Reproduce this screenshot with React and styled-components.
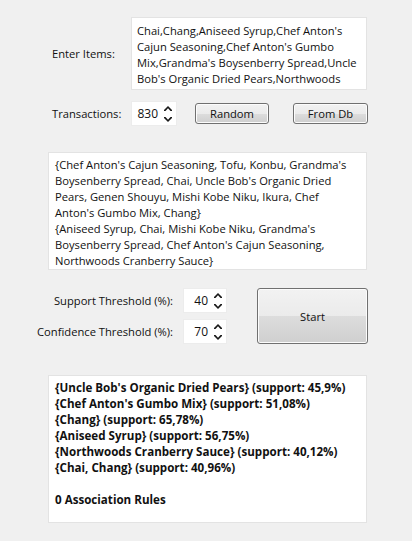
import styled, { createGlobalStyle } from 'styled-components';

const GlobalStyle = createGlobalStyle`
  html, body {
    margin: 0;
    padding: 0;
    background: #f0f0f0;
  }
  body {
    font-family: 'Open Sans', 'Noto Sans', sans-serif;
    font-size: 11.2px;
    color: #111;
  }
`;

const itemLines = [
  "Chai,Chang,Aniseed Syrup,Chef Anton's",
  "Cajun Seasoning,Chef Anton's Gumbo",
  "Mix,Grandma's Boysenberry Spread,Uncle",
  "Bob's Organic Dried Pears,Northwoods",
];

const transactionLines = [
  "{Chef Anton's Cajun Seasoning, Tofu, Konbu, Grandma's",
  "Boysenberry Spread, Chai, Uncle Bob's Organic Dried",
  "Pears, Genen Shouyu, Mishi Kobe Niku, Ikura, Chef",
  "Anton's Gumbo Mix, Chang}",
  "{Aniseed Syrup, Chai, Mishi Kobe Niku, Grandma's",
  "Boysenberry Spread, Chef Anton's Cajun Seasoning,",
  "Northwoods Cranberry Sauce}",
];

const resultLines = [
  "{Uncle Bob's Organic Dried Pears} (support: 45,9%)",
  "{Chef Anton's Gumbo Mix} (support: 51,08%)",
  "{Chang} (support: 65,78%)",
  "{Aniseed Syrup} (support: 56,75%)",
  "{Northwoods Cranberry Sauce} (support: 40,12%)",
  "{Chai, Chang} (support: 40,96%)",
  "",
  "0 Association Rules",
];

function Spinner({ value, width }) {
  return (
    <SpinBox $width={width}>
      <SpinValue>{value}</SpinValue>
      <Arrows>
        <svg width="8" height="5" viewBox="0 0 8 5">
          <path d="M0 4 L4 0 L8 4 L8 5 L6.5 5 L4 2.3 L1.5 5 L0 5 Z" fill="#1a1a1a" />
        </svg>
        <svg width="8" height="5" viewBox="0 0 8 5">
          <path d="M0 1 L4 5 L8 1 L8 0 L6.5 0 L4 2.7 L1.5 0 L0 0 Z" fill="#1a1a1a" />
        </svg>
      </Arrows>
    </SpinBox>
  );
}

export default function App() {
  return (
    <>
      <GlobalStyle />
      <Window>
        <ItemsRow>
          <FieldLabel>Enter Items:</FieldLabel>
          <ItemsBox>
            {itemLines.map((l, i) => (
              <Line key={i}>{l}</Line>
            ))}
          </ItemsBox>
        </ItemsRow>

        <TransRow>
          <FieldLabel>Transactions:</FieldLabel>
          <Spinner value="830" width={46} />
          <Button $width={74} $ml={18}>Random</Button>
          <Button $width={75} $ml={24}>From Db</Button>
        </TransRow>

        <TextPanel $height={118} $top={26}>
          {transactionLines.map((l, i) => (
            <Line key={i}>{l}</Line>
          ))}
        </TextPanel>

        <ThresholdRow>
          <ThresholdLabels>
            <ThresholdLine>
              <RightLabel>Support Threshold (%):</RightLabel>
              <Spinner value="40" width={44} />
            </ThresholdLine>
            <ThresholdLine>
              <RightLabel>Confidence Threshold (%):</RightLabel>
              <Spinner value="70" width={44} />
            </ThresholdLine>
          </ThresholdLabels>
          <StartButton>Start</StartButton>
        </ThresholdRow>

        <TextPanel $height={148} $top={31} $bold>
          {resultLines.map((l, i) => (
            <Line key={i}>{l || '\u00a0'}</Line>
          ))}
        </TextPanel>
      </Window>
    </>
  );
}

const Window = styled.div`
  width: 412px;
  height: 541px;
  padding-top: 17px;
  box-sizing: border-box;
  display: flex;
  flex-direction: column;
`;

const ItemsRow = styled.div`
  display: flex;
  align-items: center;
  padding-left: 52px;
`;

const FieldLabel = styled.div`
  width: 79px;
  white-space: nowrap;
`;

const ItemsBox = styled.div`
  width: 236px;
  height: 73px;
  box-sizing: border-box;
  background: #fff;
  border: 1px solid #e3e3e3;
  padding: 5px 0 0 5px;
  overflow: hidden;
`;

const Line = styled.div`
  white-space: nowrap;
  line-height: 16px;
`;

const TransRow = styled.div`
  display: flex;
  align-items: center;
  padding-left: 52px;
  margin-top: 11px;
  height: 25px;
`;

const SpinBox = styled.div`
  width: ${(p) => p.$width}px;
  height: 25px;
  box-sizing: border-box;
  background: #fff;
  border: 1px solid #ececec;
  display: flex;
  align-items: center;
  justify-content: flex-end;
  padding-right: 4px;
  gap: 6px;
`;

const SpinValue = styled.span`
  font-size: 12px;
`;

const Arrows = styled.div`
  display: flex;
  flex-direction: column;
  gap: 6px;
  & svg {
    display: block;
  }
`;

const Button = styled.div`
  width: ${(p) => p.$width}px;
  height: 21px;
  margin-left: ${(p) => p.$ml}px;
  box-sizing: border-box;
  border: 1px solid #707070;
  border-radius: 3px;
  background: linear-gradient(#f2f2f2 0%, #ebebeb 50%, #dddddd 50%, #cfcfcf 100%);
  display: flex;
  align-items: center;
  justify-content: center;
  box-shadow: inset 0 0 0 1px #fcfcfc;
`;

const TextPanel = styled.div`
  width: 319px;
  height: ${(p) => p.$height}px;
  margin: ${(p) => p.$top}px 0 0 48px;
  box-sizing: border-box;
  background: #fff;
  border: 1px solid #e3e3e3;
  padding: 4px 0 0 6px;
  font-weight: ${(p) => (p.$bold ? 700 : 400)};
  font-size: ${(p) => (p.$bold ? '11.6px' : '11.2px')};
  overflow: hidden;
`;

const ThresholdRow = styled.div`
  display: flex;
  margin-top: 18px;
`;

const ThresholdLabels = styled.div`
  display: flex;
  flex-direction: column;
  gap: 6px;
`;

const ThresholdLine = styled.div`
  display: flex;
  align-items: center;
`;

const RightLabel = styled.div`
  width: 183px;
  padding-right: 10px;
  box-sizing: border-box;
  text-align: right;
  white-space: nowrap;
`;

const StartButton = styled.div`
  width: 111px;
  height: 56px;
  margin-left: 30px;
  box-sizing: border-box;
  border: 1px solid #707070;
  border-radius: 3px;
  background: linear-gradient(#f2f2f2 0%, #ebebeb 50%, #dddddd 50%, #cfcfcf 100%);
  box-shadow: inset 0 0 0 1px #fcfcfc;
  display: flex;
  align-items: center;
  justify-content: center;
`;
